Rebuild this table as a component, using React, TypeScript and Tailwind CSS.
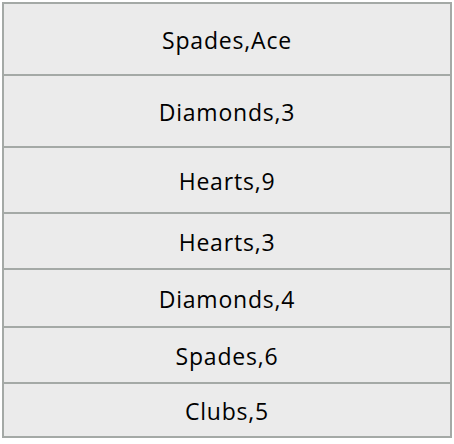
const rows = [
  { label: "Spades,Ace", h: "h-[72px]" },
  { label: "Diamonds,3", h: "h-[72px]" },
  { label: "Hearts,9", h: "h-[66px]" },
  { label: "Hearts,3", h: "h-[56px]" },
  { label: "Diamonds,4", h: "h-[58px]" },
  { label: "Spades,6", h: "h-[56px]" },
  { label: "Clubs,5", h: "h-[52px]" },
];

export default function App() {
  return (
    <div className="p-[2px] bg-white w-[454px] h-[444px]">
      <ul className="w-[450px] border-2 border-[#a4a9a6] bg-[#ebebeb] font-['Open_Sans','Liberation_Sans',sans-serif] text-[23px] tracking-[0.8px] text-black">
        {rows.map((r, i) => (
          <li
            key={i}
            className={`${r.h} pt-[2px] flex items-center justify-center ${i < rows.length - 1 ? "border-b-2 border-[#a4a9a6]" : ""}`}
          >
            {r.label}
          </li>
        ))}
      </ul>
    </div>
  );
}
